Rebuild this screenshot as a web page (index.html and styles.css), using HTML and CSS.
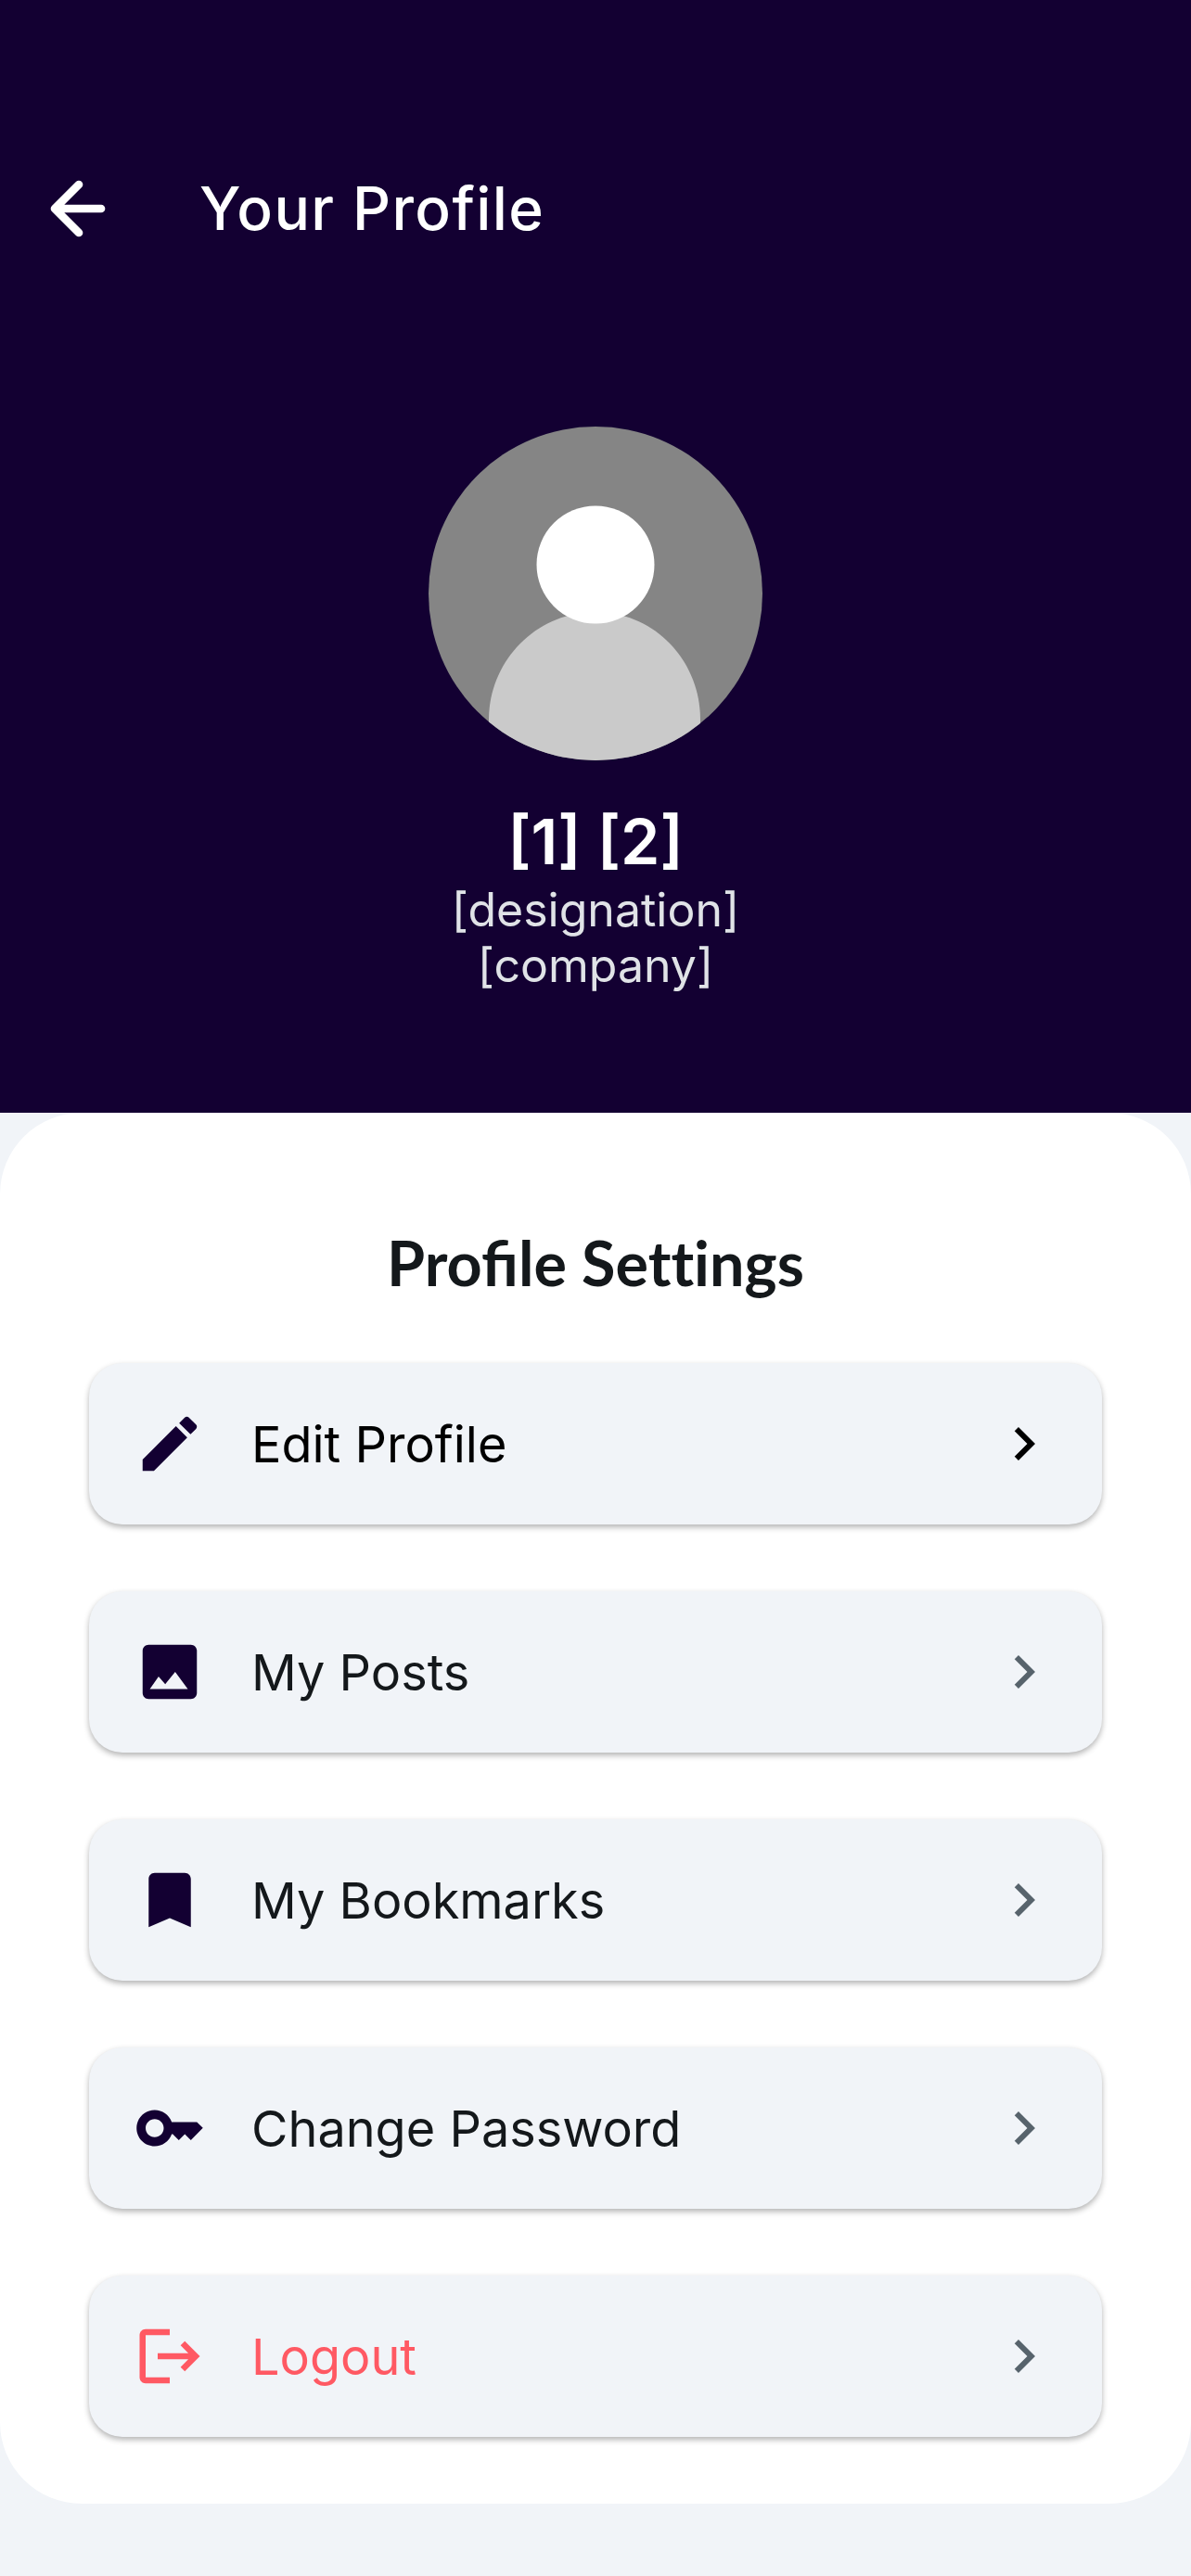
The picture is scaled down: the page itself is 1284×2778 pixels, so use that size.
FILE: index.html
```html
<!DOCTYPE html>
<html lang="en">
<head>
    <meta charset="UTF-8">
    <meta name="viewport" content="width=device-width, initial-scale=1.0">
    <title>Your Profile</title>
    <link rel="stylesheet" href="styles.css">
</head>
<body>
    <header class="profile-header">
        <div class="nav-bar">
            <svg class="back-icon" viewBox="0 0 64 64" fill="none" stroke="#fff" stroke-width="8.7" stroke-linecap="round" stroke-linejoin="round">
                <path d="M57 32H8M33 6L7 32L33 58"/>
            </svg>
            <h1 class="page-title">Your Profile</h1>
        </div>

        <svg class="avatar" viewBox="0 0 360 360">
            <defs>
                <clipPath id="avatarClip"><circle cx="180" cy="180" r="180"/></clipPath>
            </defs>
            <g clip-path="url(#avatarClip)">
                <rect width="360" height="360" fill="#858585"/>
                <path d="M65 360V316C65 253 116 200 180 200C244 200 293 253 293 316V360Z" fill="#cacaca"/>
                <circle cx="180" cy="149" r="63.5" fill="#fff"/>
            </g>
        </svg>

        <div class="profile-name">[1] [2]</div>
        <div class="profile-meta">[designation]</div>
        <div class="profile-meta">[company]</div>
    </header>

    <main class="settings-card">
        <h2 class="settings-title">Profile <span class="no-ligature">Settings</span></h2>

        <div class="settings-list">
            <div class="settings-row row-active">
                <svg class="row-icon" viewBox="0 0 24 24"><path d="M3 17.25V21h3.75L17.81 9.94l-3.75-3.75L3 17.25zM20.71 7.04c.39-.39.39-1.02 0-1.41l-2.34-2.34c-.39-.39-1.02-.39-1.41 0l-1.83 1.83 3.75 3.75 1.83-1.83z"/></svg>
                <span class="row-label">Edit Profile</span>
                <svg class="row-chevron" viewBox="0 0 24 24"><path d="M10 6L8.59 7.41 13.17 12l-4.58 4.59L10 18l6-6z"/></svg>
            </div>

            <div class="settings-row">
                <svg class="row-icon" viewBox="0 0 24 24"><path fill-rule="evenodd" d="M21 19V5c0-1.1-.9-2-2-2H5c-1.1 0-2 .9-2 2v14c0 1.1.9 2 2 2h14c1.1 0 2-.9 2-2zM8.3 13.5l2.2 2.6 3.3-4.1 4.2 5.7H5.4z"/></svg>
                <span class="row-label">My Posts</span>
                <svg class="row-chevron" viewBox="0 0 24 24"><path d="M10 6L8.59 7.41 13.17 12l-4.58 4.59L10 18l6-6z"/></svg>
            </div>

            <div class="settings-row">
                <svg class="row-icon" viewBox="0 0 24 24"><path d="M17 3H7c-1.1 0-1.99.9-1.99 2L5 21l7-3 7 3V5c0-1.1-.9-2-2-2z"/></svg>
                <span class="row-label">My Bookmarks</span>
                <svg class="row-chevron" viewBox="0 0 24 24"><path d="M10 6L8.59 7.41 13.17 12l-4.58 4.59L10 18l6-6z"/></svg>
            </div>

            <div class="settings-row">
                <svg class="row-icon" viewBox="0 0 24 24"><path d="M21 10h-8.35C11.83 7.67 9.61 6 7 6c-3.31 0-6 2.69-6 6s2.69 6 6 6c2.61 0 4.83-1.67 5.65-4H13l2 2 2-2 2 2 4-4.04L21 10zM7 15c-1.65 0-3-1.35-3-3s1.35-3 3-3 3 1.35 3 3-1.35 3-3 3z"/></svg>
                <span class="row-label">Change Password</span>
                <svg class="row-chevron" viewBox="0 0 24 24"><path d="M10 6L8.59 7.41 13.17 12l-4.58 4.59L10 18l6-6z"/></svg>
            </div>

            <div class="settings-row row-logout">
                <svg class="row-icon" viewBox="0 0 24 24"><path d="M17 7l-1.41 1.41L18.17 11H8v2h10.17l-2.58 2.58L17 17l5-5zM4 5h8V3H4c-1.1 0-2 .9-2 2v14c0 1.1.9 2 2 2h8v-2H4V5z"/></svg>
                <span class="row-label">Logout</span>
                <svg class="row-chevron" viewBox="0 0 24 24"><path d="M10 6L8.59 7.41 13.17 12l-4.58 4.59L10 18l6-6z"/></svg>
            </div>
        </div>
    </main>
</body>
</html>
```

FILE: styles.css
```css
body {
    margin: 0;
    min-height: 2778px;
    background-color: #f1f4f8;
    color: #14181b;
    font-family: Inter, "Liberation Sans", sans-serif;
}

.profile-header {
    box-sizing: border-box;
    height: 1200px;
    padding-top: 193px;
    background-color: #130032;
    color: #fff;
    text-align: center;
}

.nav-bar {
    display: flex;
    align-items: center;
    height: 64px;
    padding-left: 52px;
    margin-bottom: 203px;
}

.back-icon {
    width: 64px;
    height: 64px;
    flex: none;
}

.page-title {
    margin: 0 0 0 99px;
    font-size: 64px;
    font-weight: 500;
    line-height: 64px;
    letter-spacing: 1.4px;
}

.avatar {
    display: block;
    width: 360px;
    height: 360px;
    margin: 0 auto 43px;
}

.profile-name {
    font-size: 68px;
    font-weight: 600;
    line-height: 88px;
}

.profile-meta {
    font-size: 50px;
    line-height: 60px;
    color: #e0e3e7;
}

.settings-card {
    box-sizing: border-box;
    height: 1500px;
    padding: 0 96px;
    background-color: #fff;
    border-radius: 88px;
}

.settings-title {
    margin: 0;
    padding-top: 115px;
    height: 155px;
    font-family: Lato, sans-serif;
    font-size: 66.5px;
    font-weight: 700;
    line-height: 92px;
    text-align: center;
}

.no-ligature {
    font-variant-ligatures: none;
}

.settings-list {
    display: flex;
    flex-direction: column;
    gap: 72px;
}

.settings-row {
    display: flex;
    align-items: center;
    height: 174px;
    padding: 0 48px;
    background-color: #f1f4f8;
    border-radius: 36px;
    box-shadow: 0 3px 6px rgba(0, 0, 0, 0.3);
}

.row-icon {
    width: 78px;
    height: 78px;
    flex: none;
    fill: #130032;
}

.row-label {
    flex: 1;
    margin-left: 49px;
    padding-top: 2px;
    font-size: 54px;
    line-height: 70px;
}

.row-chevron {
    width: 72px;
    height: 72px;
    flex: none;
    fill: #57636c;
}

.row-active .row-label,
.row-active .row-chevron {
    color: #000;
    fill: #000;
}

.row-logout .row-icon,
.row-logout .row-label {
    color: #ff5963;
    fill: #ff5963;
}
```
